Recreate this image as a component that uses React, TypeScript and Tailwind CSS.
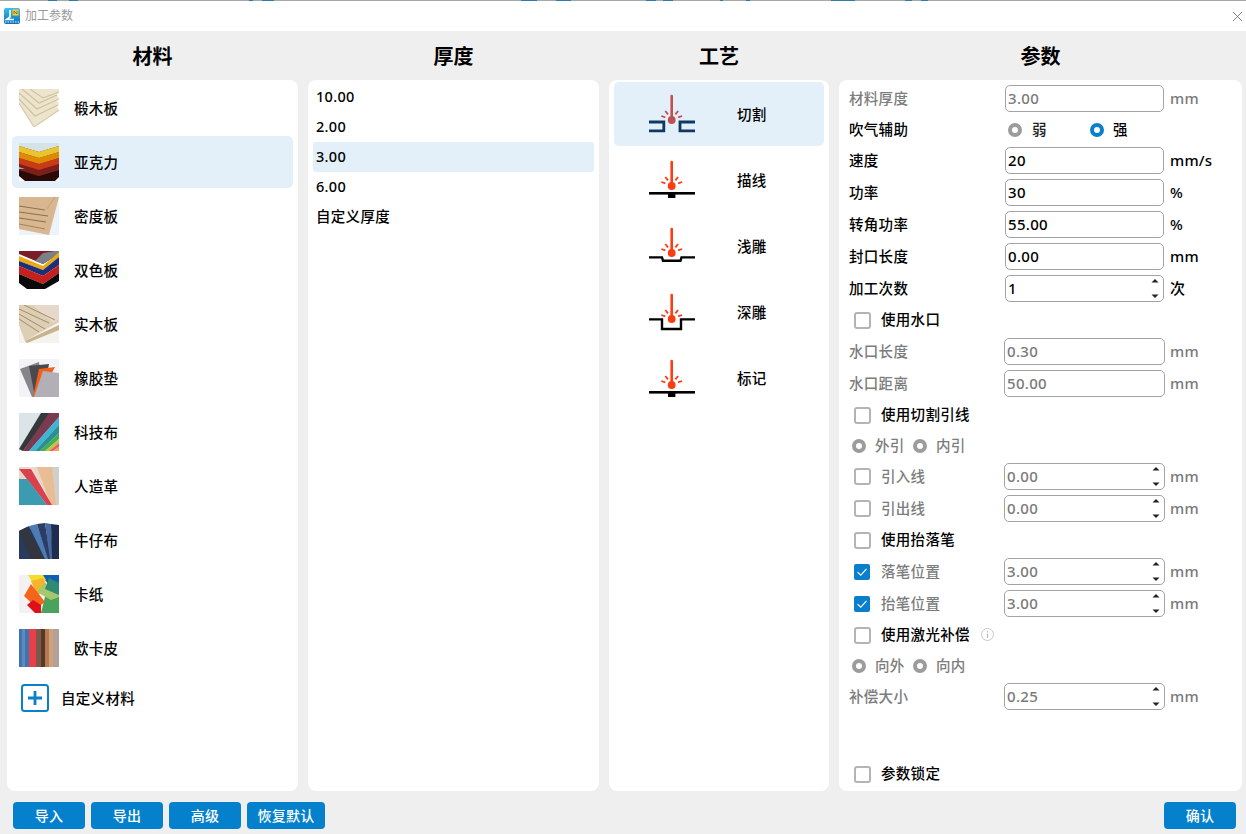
import React from "react";

const Thumb = ({ children, bg = "#ffffff" }: { children: React.ReactNode; bg?: string }) => (
  <span className="block w-[40px] h-[38px] shrink-0 overflow-hidden">
    <svg viewBox="0 0 40 38" className="w-[40px] h-[38px] block blur-[0.35px]" style={{ background: bg }}>
      {children}
    </svg>
  </span>
);

const thumbs: React.ReactNode[] = [
  <Thumb key="a">
    <polygon points="0,0 40,0 40,3 38,6 40,9 38,12 40,15 38,18 40,21 15,38 0,14" fill="#ece4cc" />
    <g fill="none" stroke="#cfc19f" strokeWidth="1.1">
      <polyline points="11,0 24,9 40,3" />
      <polyline points="3,0 20,14 38,6" />
      <polyline points="0,4 18,20 40,10" />
      <polyline points="0,10 16,27 39,16" />
    </g>
    <polyline points="0,14 15,38 40,21" fill="none" stroke="#d8c9ad" strokeWidth="1.2" />
  </Thumb>,
  <Thumb key="b">
    <rect width="40" height="38" fill="#a9332a" />
    <polygon points="0,0 40,0 40,3 20,9 0,3" fill="#d5e2e6" />
    <polygon points="0,3 20,9 40,3 40,9 20,15 0,9" fill="#e8c52c" />
    <polygon points="0,9 20,15 40,9 40,15 20,21 0,15" fill="#dd8a06" />
    <polygon points="0,15 20,21 40,15 40,21 20,27 0,21" fill="#c93a16" />
    <polygon points="0,21 20,27 40,21 40,27 20,33 0,27" fill="#7c1f18" />
    <polygon points="0,24 6,26 0,26" fill="#aaa" />
    <polygon points="0,27 20,33 40,27 40,38 0,38" fill="#2a0a08" />
    <polygon points="0,33 6,38 0,38" fill="#fff" />
    <polygon points="40,34 36,38 40,38" fill="#fff" />
  </Thumb>,
  <Thumb key="c" bg="#eef2fa">
    <polygon points="0,0 40,0 30,38 0,32" fill="#d8b68f" />
    <polyline points="0,9 26,13" stroke="#8a6f50" strokeWidth="1" fill="none" />
    <polyline points="0,15 29,19" stroke="#8a6f50" strokeWidth="1" fill="none" />
    <polyline points="0,21 27,25" stroke="#8a6f50" strokeWidth="1" fill="none" />
    <polyline points="0,27 26,32" stroke="#a08560" strokeWidth="1" fill="none" />
    <polyline points="36,0 28,12" stroke="#c0a07a" strokeWidth="1" fill="none" />
  </Thumb>,
  <Thumb key="d">
    <polygon points="0,0 40,0 40,3 24,13 0,3" fill="#7a1d26" />
    <polygon points="24,2 36,0 40,0 40,3 24,13 16,10" fill="#7b7f86" />
    <polygon points="0,5 24,15 40,1 40,6 24,19 0,10" fill="#e9aa14" />
    <polygon points="0,10 24,19 40,6 40,14 24,25 0,15" fill="#1d2f78" />
    <polygon points="0,15 24,25 40,14 40,22 24,33 0,23" fill="#c5201c" />
    <polygon points="0,23 24,33 40,22 40,30 26,38 8,38 0,32" fill="#0a0a0a" />
  </Thumb>,
  <Thumb key="e" bg="#f6f2ec">
    <polygon points="0,0 40,0 40,17 6,36 0,20" fill="#dccfb6" />
    <polygon points="14,0 40,0 40,14 34,18" fill="#e6d9cc" />
    <g stroke="#a58c60" strokeWidth="1" fill="none">
      <line x1="0" y1="4" x2="30" y2="18" />
      <line x1="0" y1="9" x2="26" y2="24" />
      <line x1="0" y1="14" x2="20" y2="27" />
      <line x1="5" y1="0" x2="36" y2="15" />
    </g>
    <polygon points="6,36 40,20 40,25 8,38" fill="#c7b48f" />
  </Thumb>,
  <Thumb key="f" bg="#f3f3f7">
    <polygon points="1,10 20,3 24,36 13,38" fill="#85868c" />
    <polygon points="10,7 30,5 24,36 16,38" fill="#4a4a4d" />
    <polygon points="20,10 36,8 20,38 14,38" fill="#f4601c" />
    <polygon points="24,12 40,14 40,38 15,38" fill="#b2b0b6" />
  </Thumb>,
  <Thumb key="g" bg="#dbe4e6">
    <polygon points="0,36 22,0 32,0 4,38" fill="#34383a" />
    <polygon points="4,38 30,0 40,0 40,4 10,38" fill="#7c3a50" />
    <polygon points="10,38 40,4 40,12 16,38" fill="#3fb3d3" />
    <polygon points="16,38 40,12 40,20 21,38" fill="#2b8f8f" />
    <polygon points="21,38 40,20 40,26 26,38" fill="#44ad58" />
    <polygon points="26,38 40,26 40,30 30,38" fill="#b8c93c" />
    <polygon points="30,38 40,30 40,34 34,38" fill="#f15b6c" />
    <polygon points="34,38 40,34 40,38" fill="#f6a058" />
  </Thumb>,
  <Thumb key="h" bg="#e8d7c2">
    <rect x="30" width="10" height="38" fill="#d2cfca" />
    <polygon points="18,0 33,0 37,38 32,38" fill="#e8bd94" />
    <polygon points="0,2 14,0 28,30 32,38 20,38" fill="#f5d8d4" />
    <polygon points="0,2 12,2 33,38 28,38" fill="#d8424f" />
    <polygon points="0,12 8,12 28,38 0,38" fill="#3b9bb0" />
  </Thumb>,
  <Thumb key="i">
    <polygon points="0,10 10,5 32,38 0,38" fill="#293a5e" />
    <polygon points="0,10 8,6 26,38 12,38" fill="#33353f" />
    <polygon points="10,5 18,3 30,38 26,38" fill="#4d7bb4" />
    <polygon points="18,3 26,2 32,38 29,38" fill="#2b3d66" />
    <polygon points="26,2 32,3 34,38 31,38" fill="#446a9f" />
    <polygon points="32,3 40,4 40,38 33,38" fill="#1f2c4e" />
  </Thumb>,
  <Thumb key="j" bg="#f2f2f2">
    <polygon points="22,0 40,0 40,20 30,10" fill="#0f5fb4" />
    <polygon points="9,0 24,0 27,5 16,12" fill="#f6dc2a" />
    <polygon points="12,6 24,3 30,14 18,20" fill="#f4b52a" />
    <polygon points="30,10 40,8 40,38 22,38 26,22" fill="#4aa35c" />
    <polygon points="25,8 40,17 40,22 32,25 18,17" fill="#a6c76c" />
    <polygon points="5,21 12,9 26,27 18,33" fill="#f4641a" />
    <polygon points="8,30 14,25 22,30 22,38 16,38" fill="#e0101a" />
    <polygon points="30,3 40,8 40,20 26,14" fill="#2f8a74" />
  </Thumb>,
  <Thumb key="k">
    <rect width="11" height="38" fill="#3f74ac" />
    <rect x="3" width="3" height="38" fill="#5a8cc0" />
    <rect x="10" width="7" height="38" fill="#ea3f48" />
    <rect x="17" width="5" height="38" fill="#7a5a4a" />
    <rect x="22" width="4" height="38" fill="#5a352a" />
    <rect x="26" width="4" height="38" fill="#b57b4e" />
    <rect x="30" width="4" height="38" fill="#d0a27c" />
    <rect x="34" width="6" height="38" fill="#b3a096" />
  </Thumb>,
];

const materials = ["椴木板", "亚克力", "密度板", "双色板", "实木板", "橡胶垫", "科技布", "人造革", "牛仔布", "卡纸", "欧卡皮"];
const thicknesses = ["10.00", "2.00", "3.00", "6.00", "自定义厚度"];
const topBits = [[48, 9], [69, 9], [249, 4], [262, 12], [521, 16], [556, 15], [646, 10], [663, 10], [720, 3], [746, 4], [831, 24], [905, 7], [921, 7]];

const Laser = ({ base, y, cut }: { base: React.ReactNode; y: number; cut?: boolean }) => {
  const c = cut ? "#c0504d" : "#fc3d12";
  return (
    <svg viewBox="0 0 46 40" className="w-[46px] h-[40px] shrink-0 block" fill="none">
      <g transform={`translate(0 ${y})`}>
        <line x1="22.7" y1="0" x2="22.7" y2="22" stroke={c} strokeWidth="2.6" strokeLinecap="round" />
        <circle cx="22.7" cy="24" r="3.9" fill={c} />
        <g stroke={c} strokeWidth="1.8">
          <line x1="16.3" y1="15" x2="19" y2="18.4" />
          <line x1="29.1" y1="15" x2="26.4" y2="18.4" />
          <line x1="12.3" y1="20" x2="16.3" y2="21.4" />
          <line x1="33.1" y1="20" x2="29.1" y2="21.4" />
        </g>
        {base}
      </g>
    </svg>
  );
};

const markBase = (
  <>
    <rect x="0" y="30" width="46" height="2.6" fill="#000" />
    <rect x="19" y="31" width="7.4" height="5" fill="#000" />
  </>
);

const processes: { name: string; icon: React.ReactNode }[] = [
  {
    name: "切割",
    icon: (
      <Laser
        cut
        y={2}
        base={
          <g stroke="#0f3a5f" strokeWidth="2.8">
            <path d="M0 26 H14.8 V34.8 H0" />
            <path d="M46 26 H31 V34.8 H46" />
          </g>
        }
      />
    ),
  },
  { name: "描线", icon: <Laser y={2} base={markBase} /> },
  {
    name: "浅雕",
    icon: <Laser y={3} base={<path d="M0 28.4 H13 L14 31.8 H31.5 L32.5 28.4 H46" stroke="#000" strokeWidth="2.4" />} />,
  },
  {
    name: "深雕",
    icon: <Laser y={3} base={<path d="M0 24.4 H13 V34 H32 V24.4 H46" stroke="#000" strokeWidth="2.4" />} />,
  },
  { name: "标记", icon: <Laser y={3} base={markBase} /> },
];

const Input = ({ value, disabled, spin, wide }: { value: string; disabled?: boolean; spin?: boolean; wide?: boolean }) => (
  <div
    className={`relative flex items-center h-[27px] rounded-[5px] border border-[#a3a3a3] bg-white pl-[2px] text-[15px] font-medium tracking-[0.3px] ${
      wide ? "w-[161px] -mr-px" : "w-[159px]"
    } ${disabled ? "text-[#7a7a7a]" : "text-black"}`}
  >
    {value}
    {spin && (
      <svg viewBox="0 0 8 22" className="absolute right-[4px] top-[2px] w-[8px] h-[22px]">
        <polygon points="4,1 7.5,4.5 0.5,4.5" fill="#222" />
        <polygon points="4,20 7.5,16.5 0.5,16.5" fill="#222" />
      </svg>
    )}
  </div>
);

const Unit = ({ children, disabled }: { children: string; disabled?: boolean }) => (
  <span className={`ml-[6px] text-[15px] font-medium tracking-[0.2px] ${disabled ? "text-[#7a7a7a]" : "text-black"}`}>{children}</span>
);

const Check = ({ on }: { on?: boolean }) =>
  on ? (
    <span className="flex items-center justify-center w-[16px] h-[16px] rounded-[2px] bg-[#0a7fcb] shrink-0">
      <svg viewBox="0 0 16 16" className="w-[16px] h-[16px]" fill="none">
        <path d="M3.5 8.2 L6.8 11.2 L12.5 4.8" stroke="#fff" strokeWidth="1.1" />
      </svg>
    </span>
  ) : (
    <span className="block w-[17px] h-[17px] rounded-[3px] border-2 border-[#b4b4b4] bg-white shrink-0" />
  );

const Radio = ({ on }: { on?: boolean }) => (
  <span className={`block w-[14px] h-[14px] rounded-full border-4 bg-white shrink-0 ${on ? "border-[#0a7fcb]" : "border-[#9c9c9c]"}`} />
);

const Label = ({ children, disabled }: { children: string; disabled?: boolean }) => (
  <span className={`w-[156px] shrink-0 text-[14.5px] font-medium tracking-[0.3px] ${disabled ? "text-[#7c7c7c]" : "text-black"}`}>{children}</span>
);

const CheckTitle = ({ children, h, info }: { children: string; h: string; info?: boolean }) => (
  <div className={`flex items-center pl-[5px] ${h}`}>
    <Check />
    <span className="ml-[10px] text-[14.5px] font-medium tracking-[0.3px] text-black">{children}</span>
    {info && (
      <svg viewBox="0 0 16 16" className="ml-[10px] -mt-[2px] w-[15px] h-[15px]" fill="none">
        <circle cx="8" cy="8" r="6.4" stroke="#c4c4c4" />
        <rect x="7.4" y="7" width="1.2" height="4.6" fill="#b8b8b8" />
        <rect x="7.4" y="4.4" width="1.2" height="1.4" fill="#b8b8b8" />
      </svg>
    )}
  </div>
);

const CheckRow = ({ label, on, value, gap }: { label: string; on?: boolean; value: string; gap?: boolean }) => (
  <div className={`flex items-center pl-[5px] h-[27px] ${gap ? "mt-[5px]" : ""}`}>
    <span className="w-[17px] shrink-0 flex">
      <Check on={on} />
    </span>
    <span className="ml-[10px] w-[123px] shrink-0 text-[14.5px] font-medium tracking-[0.3px] text-[#7c7c7c]">{label}</span>
    <Input value={value} spin disabled wide />
    <Unit disabled>mm</Unit>
  </div>
);

const RadioPair = ({ a, b }: { a: string; b: string }) => (
  <div className="flex items-center pl-[3px] h-[26px] mb-[4px] text-[14.5px] font-medium tracking-[0.3px] text-[#7c7c7c]">
    <Radio />
    <span className="ml-[9px] w-[38px]">{a}</span>
    <Radio />
    <span className="ml-[9px]">{b}</span>
  </div>
);

const FootBtn = ({ children, w }: { children: string; w: string }) => (
  <button className={`h-[27px] rounded-[4px] bg-[#0480cc] text-white text-[14px] font-medium tracking-[0.3px] ${w}`}>{children}</button>
);

const grayLabel = "w-[155px] shrink-0 text-[14.5px] font-medium tracking-[0.3px] text-[#7c7c7c]";

export default function App() {
  return (
    <div
      className="relative h-[834px] w-full flex flex-col overflow-hidden bg-[#efefef] text-black"
      style={{ fontFamily: '"Noto Sans", "Noto Sans CJK SC", sans-serif' }}
    >
      {topBits.map(([x, w]) => (
        <span key={x} className="absolute top-0 h-px bg-[#2b7ca8]" style={{ left: x, width: w }} />
      ))}
      <div className="h-[31px] shrink-0 bg-white border-t border-[#a8a8a8] flex items-center pl-[4px] pr-[3px]">
        <svg viewBox="0 0 16 16" className="w-[16px] h-[16px] shrink-0">
          <defs>
            <linearGradient id="lg" x1="0" y1="0" x2="0" y2="1">
              <stop offset="0" stopColor="#39c0e8" />
              <stop offset="1" stopColor="#0d6fb8" />
            </linearGradient>
          </defs>
          <rect width="16" height="16" rx="2" fill="url(#lg)" />
          <rect x="8.5" y="1.5" width="6" height="6" fill="#f5c93c" />
          <path d="M10 6 V3 L13 6 V3" stroke="#7a5a10" strokeWidth="0.7" fill="none" />
          <path d="M6 2 V9 L2.5 11.5 H10" stroke="#fff" strokeWidth="1.6" fill="none" />
          <path d="M1 14 H15" stroke="#e8fbff" strokeWidth="1" strokeDasharray="1.5 1" />
        </svg>
        <span className="ml-[5px] text-[12px] text-[#9a9a9a]">加工参数</span>
        <svg viewBox="0 0 12 12" className="ml-auto w-[11px] h-[11px]" fill="none">
          <path d="M1 1 L11 11 M11 1 L1 11" stroke="#666" strokeWidth="0.9" />
        </svg>
      </div>

      <div className="h-[49px] shrink-0 flex gap-[10px] pl-[7px] pt-[2px] items-center text-[20px] font-bold">
        <div className="w-[291px] text-center">材料</div>
        <div className="w-[291px] text-center">厚度</div>
        <div className="w-[220px] text-center">工艺</div>
        <div className="w-[403px] text-center">参数</div>
      </div>

      <div className="flex-1 min-h-0 flex gap-[10px] pl-[7px]">
        <div className="w-[291px] bg-white rounded-[8px] pt-[2px] px-[5px] flex flex-col gap-[2px]">
          {materials.map((m, i) => (
            <div key={m} className={`h-[52px] flex items-center rounded-[5px] pl-[7px] ${i === 1 ? "bg-[#e3f0f9]" : ""}`}>
              {thumbs[i]}
              <span className="ml-[15px] pt-[2px] text-[14.5px] font-medium tracking-[0.3px]">{m}</span>
            </div>
          ))}
          <div className="flex items-center h-[48px] pl-[9px] -mt-[2px]">
            <svg viewBox="0 0 28 28" className="w-[28px] h-[28px]" fill="none">
              <rect x="1" y="1" width="26" height="26" rx="2.5" stroke="#0a80c8" strokeWidth="2" />
              <path d="M14 7 V21 M7 14 H21" stroke="#0a80c8" strokeWidth="2.8" />
            </svg>
            <span className="ml-[12px] pt-[2px] text-[14.5px] font-medium tracking-[0.3px]">自定义材料</span>
          </div>
        </div>

        <div className="w-[291px] bg-white rounded-[8px] pt-[2px] px-[5px] flex flex-col">
          {thicknesses.map((t, i) => (
            <div key={t} className={`h-[30px] flex items-center pl-[3px] rounded-[3px] text-[14.5px] font-medium tracking-[0.3px] ${i === 2 ? "bg-[#e3f0f9]" : ""}`}>
              {t}
            </div>
          ))}
        </div>

        <div className="w-[220px] bg-white rounded-[8px] pt-[2px] px-[5px] flex flex-col gap-[2px]">
          {processes.map((p, i) => (
            <div key={p.name} className={`h-[64px] flex items-center rounded-[5px] pl-[35px] ${i === 0 ? "bg-[#e3f0f9]" : ""}`}>
              {p.icon}
              <span className="ml-[42px] pt-[2px] text-[14.5px] font-medium tracking-[0.3px]">{p.name}</span>
            </div>
          ))}
        </div>

        <div className="w-[403px] bg-white rounded-[8px] pt-[5px] px-[10px] pb-[1px] flex flex-col">
          <div className="flex items-center h-[27px]">
            <Label disabled>材料厚度</Label>
            <Input value="3.00" disabled />
            <Unit disabled>mm</Unit>
          </div>
          <div className="flex items-center h-[35px]">
            <Label>吹气辅助</Label>
            <span className="ml-[3px] flex items-center text-[14.5px] font-medium">
              <Radio />
              <span className="ml-[10px] w-[58px] text-[#222]">弱</span>
              <Radio on />
              <span className="ml-[9px]">强</span>
            </span>
          </div>
          <div className="flex flex-col gap-[5px]">
            <div className="flex items-center h-[27px]">
              <Label>速度</Label>
              <Input value="20" />
              <Unit>mm/s</Unit>
            </div>
            <div className="flex items-center h-[27px]">
              <Label>功率</Label>
              <Input value="30" />
              <Unit>%</Unit>
            </div>
            <div className="flex items-center h-[27px]">
              <Label>转角功率</Label>
              <Input value="55.00" />
              <Unit>%</Unit>
            </div>
            <div className="flex items-center h-[27px]">
              <Label>封口长度</Label>
              <Input value="0.00" />
              <Unit>mm</Unit>
            </div>
            <div className="flex items-center h-[27px]">
              <Label>加工次数</Label>
              <Input value="1" spin />
              <Unit>次</Unit>
            </div>
          </div>
          <CheckTitle h="h-[36px]">使用水口</CheckTitle>
          <div className="flex items-center h-[27px]">
            <span className={grayLabel}>水口长度</span>
            <Input value="0.30" disabled wide />
            <Unit disabled>mm</Unit>
          </div>
          <div className="flex items-center h-[27px] mt-[5px]">
            <span className={grayLabel}>水口距离</span>
            <Input value="50.00" disabled wide />
            <Unit disabled>mm</Unit>
          </div>
          <CheckTitle h="h-[36px]">使用切割引线</CheckTitle>
          <RadioPair a="外引" b="内引" />
          <CheckRow label="引入线" value="0.00" />
          <CheckRow label="引出线" value="0.00" gap />
          <CheckTitle h="h-[36px]">使用抬落笔</CheckTitle>
          <CheckRow label="落笔位置" on value="3.00" />
          <CheckRow label="抬笔位置" on value="3.00" gap />
          <CheckTitle h="h-[36px]" info>使用激光补偿</CheckTitle>
          <RadioPair a="向外" b="向内" />
          <div className="flex items-center h-[27px]">
            <span className={grayLabel}>补偿大小</span>
            <Input value="0.25" spin disabled wide />
            <Unit disabled>mm</Unit>
          </div>
          <div className="mt-auto">
            <CheckTitle h="h-[32px]">参数锁定</CheckTitle>
          </div>
        </div>
      </div>

      <div className="h-[43px] shrink-0 flex items-start pt-[11px] pl-[13px] pr-[10px] gap-[6px]">
        <FootBtn w="w-[72px]">导入</FootBtn>
        <FootBtn w="w-[72px]">导出</FootBtn>
        <FootBtn w="w-[72px]">高级</FootBtn>
        <FootBtn w="w-[78px]">恢复默认</FootBtn>
        <div className="ml-auto">
          <FootBtn w="w-[72px]">确认</FootBtn>
        </div>
      </div>
    </div>
  );
}
